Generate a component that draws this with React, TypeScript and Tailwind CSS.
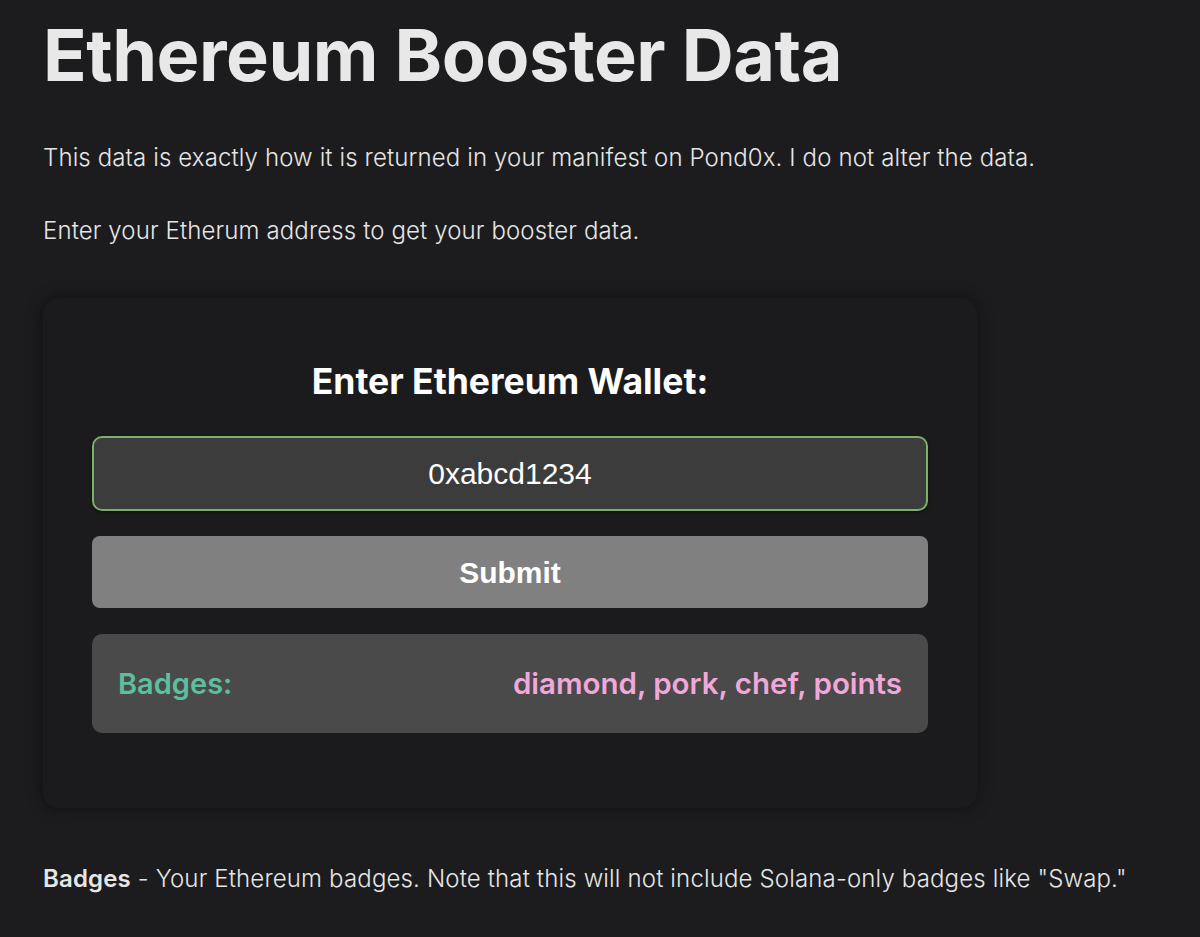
export default function App() {
  return (
    <div className="min-h-[937px] bg-[#1c1c1e] text-[#e6e6e6] font-['Inter',sans-serif] px-[43px] pt-[11px]">
      <h1 className="text-[72px] font-bold leading-[88px] tracking-[-0.5px] text-[#e8e8e8]">
        Ethereum Booster Data
      </h1>
      <p className="mt-[43px] text-[24px] font-light leading-[32px] tracking-[0.12px]">
        This data is exactly how it is returned in your manifest on Pond0x. I do not alter the data.
      </p>
      <p className="mt-[41px] text-[24px] font-light leading-[32px] tracking-[0.12px]">
        Enter your Etherum address to get your booster data.
      </p>

      <div className="mt-[51px] w-[934px] rounded-[16px] bg-[#1b1b1d] shadow-[0_0_16px_rgba(0,0,0,0.45)] px-[49px] pt-[62px] pb-[75px]">
        <h2 className="text-center text-[35.5px] font-bold leading-[44px] text-white">
          Enter Ethereum Wallet:
        </h2>
        <input
          readOnly
          value="0xabcd1234"
          className="mt-[32px] block w-full h-[75px] rounded-[10px] border-[2.5px] border-[#7aae69] bg-[#3c3c3c] text-center text-[30px] text-white font-['Liberation_Sans',Arial,sans-serif] outline-none shadow-[0_1px_3px_rgba(0,0,0,0.5)]"
        />
        <button className="mt-[25px] block w-full h-[72px] rounded-[8px] bg-[#808080] text-[30px] font-bold text-white font-['Liberation_Sans',Arial,sans-serif]">
          Submit
        </button>
        <div className="mt-[26px] flex items-center justify-between h-[99px] rounded-[10px] bg-[#4a4a4a] px-[26px]">
          <span className="text-[29px] font-semibold text-[#5cbf9d]">Badges:</span>
          <span className="text-[29.5px] font-semibold text-[#f0a8da]">diamond, pork, chef, points</span>
        </div>
      </div>

      <p className="mt-[55px] text-[24px] font-light leading-[32px] tracking-[0.15px]">
        <span className="font-semibold">Badges</span> - Your Ethereum badges. Note that this will not include Solana-only badges like "Swap."
      </p>
    </div>
  );
}
